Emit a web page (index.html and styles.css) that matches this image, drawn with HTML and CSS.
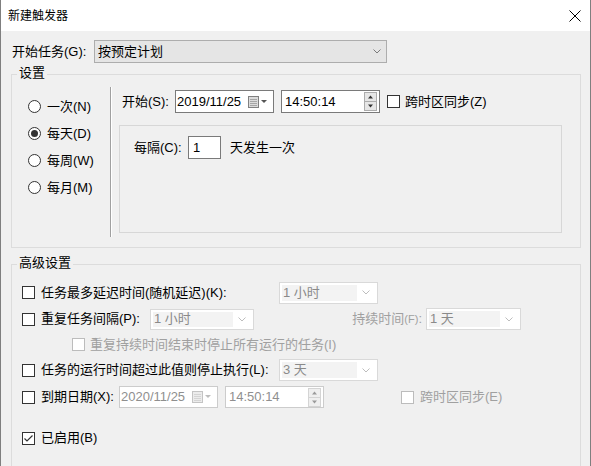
FILE: index.html
```html
<!DOCTYPE html>
<html lang="zh-CN">
<head>
<meta charset="utf-8">
<title>新建触发器</title>
<link rel="stylesheet" href="styles.css">
</head>
<body>
<div class="window">
  <div class="titlebar">
    <span class="title">新建触发器</span>
    <svg class="close" width="12" height="12" viewBox="0 0 12 12"><path d="M0.5 0.5 L11.5 11.5 M11.5 0.5 L0.5 11.5" stroke="#000" stroke-width="1" fill="none"/></svg>
  </div>
  <div class="content">
    <div class="begin-row">
      <span class="lbl begin-lbl">开始任务(G):</span>
      <div class="combo-main">
        <span class="lbl">按预定计划</span>
        <svg class="chev" width="8" height="5" viewBox="0 0 8 5"><path d="M0.5 0.5 L4 4 L7.5 0.5" stroke="#7a7a7a" fill="none"/></svg>
      </div>
    </div>

    <div class="group g1">
      <div class="group-title">设置</div>
      <div class="g1-body">
        <div class="radios">
          <div class="radio-row"><span class="radio"></span><span class="lbl">一次(N)</span></div>
          <div class="radio-row"><span class="radio on"></span><span class="lbl">每天(D)</span></div>
          <div class="radio-row"><span class="radio"></span><span class="lbl">每周(W)</span></div>
          <div class="radio-row"><span class="radio"></span><span class="lbl">每月(M)</span></div>
        </div>
        <div class="vsep"></div>
        <div class="g1-right">
          <div class="start-row">
            <span class="lbl start-lbl">开始(S):</span>
            <div class="field date">
              <span class="lbl">2019/11/25</span>
              <svg width="20" height="12" viewBox="0 0 20 12"><rect x="0.5" y="0.5" width="10" height="11" fill="#dcdcdc" stroke="#808080"/><path d="M2 3.5 H9 M2 5.5 H9 M2 7.5 H9 M2 9.5 H9" stroke="#a6a6a6"/><path d="M13 4 L19 4 L16 7 Z" fill="#555"/></svg>
            </div>
            <div class="field time">
              <span class="lbl">14:50:14</span>
              <svg class="spin" width="13" height="19" viewBox="0 0 13 19"><rect x="0.5" y="0.5" width="12" height="18" fill="#e6e6e6" stroke="#acacac"/><path d="M0 9.5 H13" stroke="#acacac"/><path d="M4 6.5 L6.5 3.5 L9 6.5 Z" fill="#333"/><path d="M4 12.5 L6.5 15.5 L9 12.5 Z" fill="#333"/></svg>
            </div>
            <span class="chk sync-chk"></span>
            <span class="lbl">跨时区同步(Z)</span>
          </div>
          <div class="inner-box">
            <div class="every-row">
              <span class="lbl every-lbl">每隔(C):</span>
              <div class="num"><span class="lbl">1</span></div>
              <span class="lbl every-after">天发生一次</span>
            </div>
          </div>
        </div>
      </div>
    </div>

    <div class="group g2">
      <div class="group-title g2-title">高级设置</div>
      <div class="g2-body">
        <div class="row r1">
          <span class="chk"></span>
          <span class="lbl cb-lbl w-wide">任务最多延迟时间(随机延迟)(K):</span>
          <div class="dcombo w99"><span class="dtxt">1 小时</span><svg class="chev" width="8" height="5" viewBox="0 0 8 5"><path d="M0.5 0.5 L4 4 L7.5 0.5" stroke="#bdbdbd" fill="none"/></svg></div>
        </div>
        <div class="row r2">
          <span class="chk"></span>
          <span class="lbl cb-lbl w-rep">重复任务间隔(P):</span>
          <div class="dcombo w104 h21"><span class="dtxt">1 小时</span><svg class="chev" width="8" height="5" viewBox="0 0 8 5"><path d="M0.5 0.5 L4 4 L7.5 0.5" stroke="#bdbdbd" fill="none"/></svg></div>
          <span class="lbl dis dur-lbl">持续时间<span class="small">(F)</span>:</span>
          <div class="dcombo w95 dur-combo"><span class="dtxt">1 天</span><svg class="chev" width="8" height="5" viewBox="0 0 8 5"><path d="M0.5 0.5 L4 4 L7.5 0.5" stroke="#bdbdbd" fill="none"/></svg></div>
        </div>
        <div class="row r3">
          <span class="chk dis sub-chk"></span>
          <span class="lbl dis cb-lbl sub-lbl">重复持续时间结束时停止所有运行的任务(I)</span>
        </div>
        <div class="row r4">
          <span class="chk"></span>
          <span class="lbl cb-lbl w-wide">任务的运行时间超过此值则停止执行(L):</span>
          <div class="dcombo w99"><span class="dtxt">3 天</span><svg class="chev" width="8" height="5" viewBox="0 0 8 5"><path d="M0.5 0.5 L4 4 L7.5 0.5" stroke="#bdbdbd" fill="none"/></svg></div>
        </div>
        <div class="row r5">
          <span class="chk"></span>
          <span class="lbl cb-lbl w-exp">到期日期(X):</span>
          <div class="field date dfield">
            <span class="lbl">2020/11/25</span>
            <svg width="20" height="12" viewBox="0 0 20 12"><rect x="0.5" y="0.5" width="10" height="11" fill="#ececec" stroke="#c4c4c4"/><path d="M2 3.5 H9 M2 5.5 H9 M2 7.5 H9 M2 9.5 H9" stroke="#d4d4d4"/><path d="M13 4 L19 4 L16 7 Z" fill="#bdbdbd"/></svg>
          </div>
          <div class="field time dfield">
            <span class="lbl">14:50:14</span>
            <svg class="spin" width="13" height="19" viewBox="0 0 13 19"><rect x="0.5" y="0.5" width="12" height="18" fill="#efefef" stroke="#d4d4d4"/><path d="M0 9.5 H13" stroke="#d4d4d4"/><path d="M4 6.5 L6.5 3.5 L9 6.5 Z" fill="#9a9a9a"/><path d="M4 12.5 L6.5 15.5 L9 12.5 Z" fill="#9a9a9a"/></svg>
          </div>
          <span class="chk dis exp-chk"></span>
          <span class="lbl dis cb-lbl">跨时区同步(E)</span>
        </div>
        <div class="row r6">
          <span class="chk"><svg width="11" height="11" viewBox="0 0 11 11"><path d="M1.5 5.5 L4 8 L9.5 2.5" stroke="#333" stroke-width="1.2" fill="none"/></svg></span>
          <span class="lbl cb-lbl">已启用(B)</span>
        </div>
      </div>
    </div>
  </div>
</div>
</body>
</html>
```

FILE: styles.css
```css
* { box-sizing: border-box; }
html, body { margin: 0; padding: 0; }
body {
  width: 591px;
  height: 466px;
  overflow: hidden;
  background: #f0f0f0;
  font-family: "Liberation Sans", "Noto Sans CJK SC", sans-serif;
  font-size: 13px;
  color: #000;
}
.window {
  width: 591px;
  height: 466px;
  border-left: 1px solid #7f7f7f;
  border-right: 1px solid #7f7f7f;
  background: #f0f0f0;
  overflow: hidden;
}
.titlebar {
  height: 31px;
  background: #fff;
  display: flex;
  align-items: center;
  justify-content: space-between;
  padding: 0 9px 0 7px;
}
.title { font-size: 12px; line-height: 16px; }
.lbl { line-height: 16px; white-space: nowrap; }
.small { font-size: 11px; }
.content { padding: 9px 9px 0 10px; }

.begin-row { display: flex; align-items: center; height: 23px; padding-left: 1px; }
.begin-lbl { width: 82px; }
.combo-main {
  width: 293px;
  height: 23px;
  border: 1px solid #adadad;
  background: #e5e5e5;
  display: flex;
  align-items: center;
  justify-content: space-between;
  padding: 0 5px 0 3px;
}

.group { border: 1px solid #dcdcdc; }
.g1 { margin-top: 11px; }
.group-title {
  width: fit-content;
  height: 16px;
  line-height: 16px;
  margin: -10px 0 0 5px;
  padding: 0 2px;
  background: #f0f0f0;
}
.g1-body { display: flex; padding: 6px 18px 10px 0; }
.radios { width: 98px; padding: 6px 0 0 16px; }
.radio-row { display: flex; align-items: center; height: 27px; }
.radio {
  width: 13px;
  height: 13px;
  border: 1px solid #333;
  border-radius: 50%;
  background: #fff;
  margin-right: 6px;
  flex: none;
  display: flex;
  align-items: center;
  justify-content: center;
}
.radio.on::after {
  content: "";
  width: 7px;
  height: 7px;
  border-radius: 50%;
  background: #333;
}
.vsep { width: 2px; border-left: 1px solid #a0a0a0; border-right: 1px solid #fff; }
.g1-right { flex: 1; padding: 3px 0 4px 7px; display: flex; flex-direction: column; }
.start-row { display: flex; align-items: center; height: 23px; padding-left: 3px; }
.start-lbl { width: 53px; }
.field {
  width: 99px;
  height: 23px;
  border: 1px solid #7a7a7a;
  background: #fff;
  display: flex;
  align-items: center;
  justify-content: space-between;
  flex: none;
}
.date { padding: 0 5px 0 1px; }
.time { margin-left: 7px; padding: 0 2px 0 3px; }
.chk {
  width: 13px;
  height: 13px;
  border: 1px solid #333;
  background: #fff;
  flex: none;
  display: flex;
  align-items: center;
  justify-content: center;
}
.sync-chk { margin: 0 5px 0 7px; }
.inner-box {
  margin-top: 12px;
  height: 108px;
  border: 1px solid #d7d7d7;
  padding: 10px 0 0 14px;
}
.every-row { display: flex; align-items: center; height: 23px; }
.every-lbl { width: 54px; }
.num {
  width: 33px;
  height: 23px;
  border: 1px solid #7a7a7a;
  background: #fff;
  padding-left: 4px;
  display: flex;
  align-items: center;
}
.every-after { margin-left: 9px; }

.g2 { margin-top: 16px; height: 300px; }
.g2-body { padding: 8px 0 0 10px; display: flex; flex-direction: column; }
.row { display: flex; align-items: center; }
.r1 { height: 27px; }
.r2 { height: 26px; }
.r3 { height: 25px; }
.r4 { height: 26px; }
.r5 { height: 28px; }
.r6 { height: 26px; margin-top: 14px; }
.cb-lbl { margin-left: 6px; }
.w-wide { width: 238px; }
.w-rep { width: 109px; }
.w-exp { width: 78px; }
.dis { color: #a0a0a0; }
.chk.dis { border-color: #bcbcbc; }
.sub-chk { margin-left: 50px; }
.sub-lbl { margin-left: 5px; }
.dur-lbl { width: 168px; text-align: right; }
.dur-combo { margin-left: 4px; }
.exp-chk { margin-left: 77px; }

.dcombo {
  height: 22px;
  border: 1px solid #d9d9d9;
  background: #fff;
  padding: 2px;
  display: flex;
  align-items: center;
  flex: none;
}
.dcombo .dtxt {
  flex: 1;
  height: 100%;
  background: #f3f3f3;
  color: #8a8a8a;
  padding-left: 1px;
  line-height: 16px;
  display: flex;
  align-items: center;
  white-space: nowrap;
}
.dcombo .chev { margin: 0 5px 0 5px; flex: none; }
.w99 { width: 99px; }
.w104 { width: 104px; }
.w95 { width: 95px; }
.h21 { height: 21px; }
.dfield { height: 22px; border-color: #cccccc; color: #8f8f8f; }
```
